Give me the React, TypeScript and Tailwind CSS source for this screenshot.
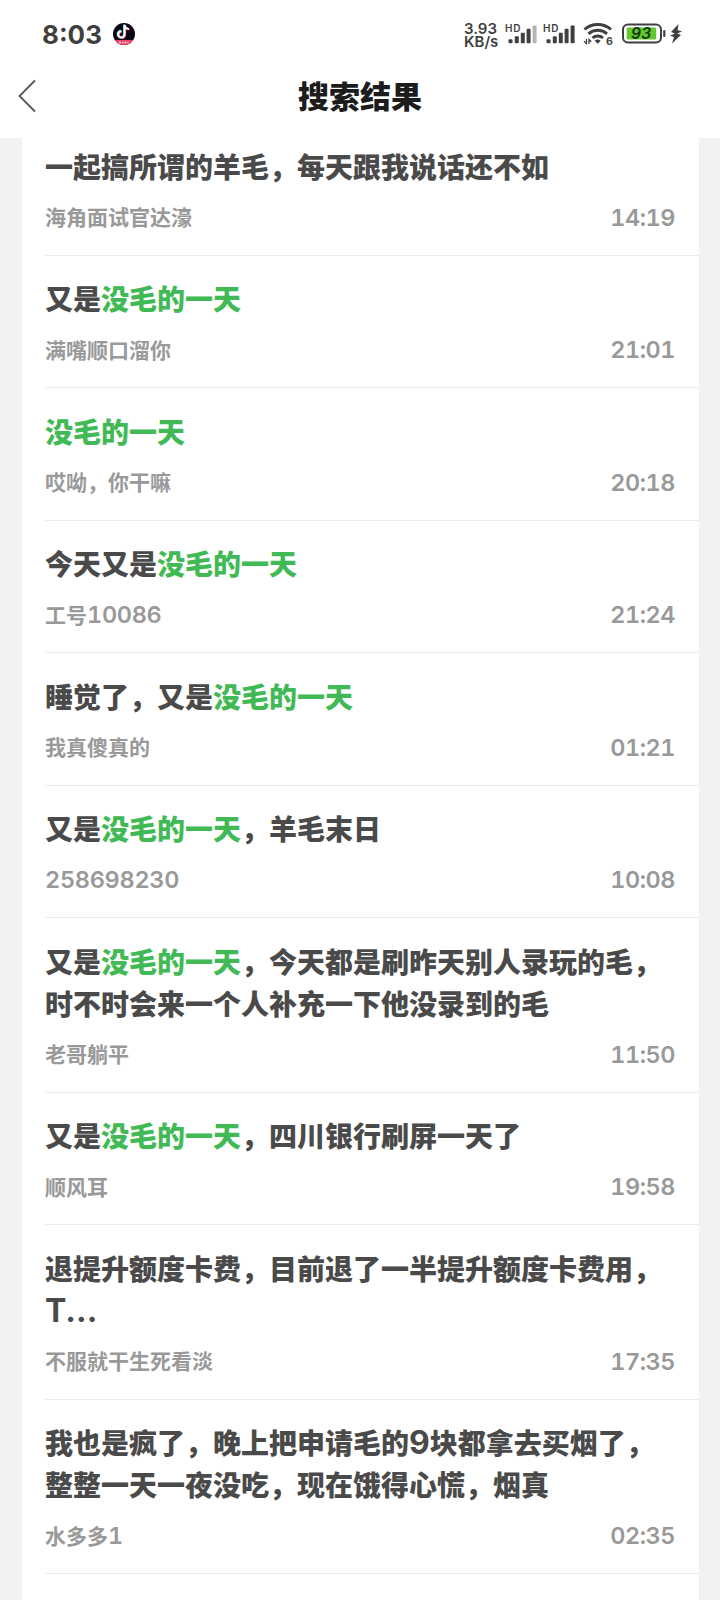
import React from 'react';

interface Result {
  id: number;
  lines: string[];
  author: string;
  time: string;
}

const KEYWORD = '没毛的一天';

const results: Result[] = [
  { id: 1, lines: ['一起搞所谓的羊毛，每天跟我说话还不如'], author: '海角面试官达濠', time: '14:19' },
  { id: 2, lines: ['又是没毛的一天'], author: '满嘴顺口溜你', time: '21:01' },
  { id: 3, lines: ['没毛的一天'], author: '哎呦，你干嘛', time: '20:18' },
  { id: 4, lines: ['今天又是没毛的一天'], author: '工号10086', time: '21:24' },
  { id: 5, lines: ['睡觉了，又是没毛的一天'], author: '我真傻真的', time: '01:21' },
  { id: 6, lines: ['又是没毛的一天，羊毛末日'], author: '258698230', time: '10:08' },
  { id: 7, lines: ['又是没毛的一天，今天都是刷昨天别人录玩的毛，', '时不时会来一个人补充一下他没录到的毛'], author: '老哥躺平', time: '11:50' },
  { id: 8, lines: ['又是没毛的一天，四川银行刷屏一天了'], author: '顺风耳', time: '19:58' },
  { id: 9, lines: ['退提升额度卡费，目前退了一半提升额度卡费用，', 'T...'], author: '不服就干生死看淡', time: '17:35' },
  { id: 10, lines: ['我也是疯了，晚上把申请毛的9块都拿去买烟了，', '整整一天一夜没吃，现在饿得心慌，烟真'], author: '水多多1', time: '02:35' },
];

// Latin letters and digits are set a little larger than the Chinese text around them
const MixedText: React.FC<{ text: string; latin: string }> = ({ text, latin }) => (
  <>
    {text.split(/([A-Za-z0-9.]+)/).map((part, i) =>
      i % 2 === 1 ? <span key={i} className={latin}>{part}</span> : part
    )}
  </>
);

const TitleLine: React.FC<{ text: string }> = ({ text }) => (
  <span className="block h-[42px] whitespace-nowrap">
    {text.split(new RegExp(`(${KEYWORD})`)).map((part, i) =>
      part === KEYWORD ? (
        <span key={i} className="text-[#41ba55]">{part}</span>
      ) : (
        <MixedText key={i} text={part} latin="font-[Inter] text-[32px] leading-none font-bold" />
      )
    )}
  </span>
);

const Signal: React.FC<{ weak?: boolean }> = ({ weak }) => (
  <svg width="34" height="24" viewBox="0 0 34 24" fill="#3f3f3f">
    <text x="0" y="9.5" fontFamily="Inter" fontSize="10" fontWeight="600" textLength="15.5">HD</text>
    <rect x="3.5" y="17.3" width="4" height="4" rx="1" />
    <rect x="9.8" y="14.2" width="4" height="7.1" rx="1" />
    <rect x="15.8" y="10.8" width="4" height="10.5" rx="1" />
    <rect x="21.6" y="6.8" width="4" height="14.5" rx="1" />
    <rect x="27.6" y="3.6" width="4" height="17.7" rx="1" fill={weak ? '#b5b5b5' : '#3f3f3f'} />
  </svg>
);

const Wifi = () => (
  <svg width="32" height="26" viewBox="0 0 32 26" fill="none" stroke="#3f3f3f">
    <path d="M1.5 8.5C9 1.8 20.5 1.8 28 8.5" strokeWidth="3" />
    <path d="M5.5 12.8c5.3-4.7 13.2-4.7 18.5 0" strokeWidth="3" />
    <path d="M9.5 17c3-2.7 7.5-2.7 10.5 0" strokeWidth="3" />
    <path d="M14.7 22.7l-3-3c1.8-1.6 4.2-1.6 6 0z" fill="#3f3f3f" stroke="none" />
    <path d="M3.5 18v4.5l-2.5-2.3M6 23v-4.5l2.3 2.3" strokeWidth="1.3" />
    <text x="23" y="24" fontFamily="Inter" fontSize="10.5" fontWeight="700" fill="#3f3f3f" stroke="none">6</text>
  </svg>
);

const Battery = () => (
  <svg width="44" height="22" viewBox="0 0 44 22">
    <rect x="1" y="1.5" width="38" height="18" rx="5" fill="#fff" stroke="#3f3f3f" strokeWidth="2" />
    <rect x="4.7" y="4.5" width="29.5" height="12" rx="1.5" fill="#62c92b" />
    <path d="M42.3 8v5" stroke="#3f3f3f" strokeWidth="2.2" strokeLinecap="round" />
    <text x="9" y="16.2" fontFamily="Inter" fontSize="15.5" fontWeight="600" fontStyle="italic" fill="#16380a" textLength="20">93</text>
  </svg>
);

const Bolt = () => (
  <svg width="12" height="20" viewBox="0 0 12 20" fill="#3f3f3f">
    <path d="M8.5 0L1 8l3.8 1.5L0 11.8l4 1.2-2 6.500 9-8.500-3.800-1.500L12 7.500 7.500 6z" />
  </svg>
);

const TikTok = () => (
  <svg width="22" height="22" viewBox="0 0 22 22">
    <defs>
      <clipPath id="disc"><circle cx="11" cy="11" r="11" /></clipPath>
    </defs>
    <g clipPath="url(#disc)">
      <rect width="22" height="22" fill="#0d0714" />
      <rect y="17" width="22" height="5" fill="#f0436a" />
      <path d="M6 19.5h2m1 0h1.5m1 0h2m1 0h1" stroke="#fbd3dc" strokeWidth="1.5" />
      <g fill="none" strokeWidth="2">
        <path d="M11 1.5V11a3.200 3.200 0 1 1-3.200-3.200M11 1.500c.3 2.500 1.800 4 4.300 4.200" stroke="#29e5e0" />
        <path d="M12.200 2.300v9.500a3.200 3.200 0 1 1-3.200-3.200M12.200 2.300c.3 2.500 1.800 4 4.300 4.200" stroke="#f5315c" />
        <path d="M11.600 1.900v9.500a3.200 3.200 0 1 1-3.200-3.200M11.600 1.900c.3 2.500 1.800 4 4.300 4.200" stroke="#fff" />
      </g>
    </g>
  </svg>
);

const StatusBar = () => (
  <div className="flex h-[68px] items-center pr-[38px] pl-[42px] text-[#3f3f3f]">
    <span className="w-[71px] pt-px font-[Inter] text-[26px] leading-none font-bold">8:03</span>
    <TikTok />
    <div className="ml-auto flex items-center">
      <div className="mr-1 flex w-[37px] flex-col pt-px font-[Inter] text-[15px] leading-[13px] font-semibold">
        <span>3.93</span>
        <span>KB/s</span>
      </div>
      <Signal weak />
      <div className="ml-1"><Signal /></div>
      <div className="ml-[6px]"><Wifi /></div>
      <div className="ml-[7px]"><Battery /></div>
      <div className="ml-1"><Bolt /></div>
    </div>
  </div>
);

const Header = () => (
  <header className="grid h-[70px] grid-cols-[1fr_auto_1fr] items-center px-[18px]">
    <button aria-label="返回" className="-mt-[15px] w-[18px]">
      <svg width="18" height="34" viewBox="0 0 18 34" fill="none" stroke="#555" strokeWidth="1.8">
        <path d="M17 1.5L1.5 17 17 32.5" />
      </svg>
    </button>
    <h1 className="-mt-[17px] text-[31px] leading-none font-black text-[#1c1c1c]">搜索结果</h1>
  </header>
);

const ResultRow: React.FC<{ item: Result }> = ({ item }) => (
  <li className="border-b border-[#ececec] pt-[21.5px] pr-6 pb-[23.56px] first:pt-[6.5px]">
    <h2 className="text-[28px] leading-[42px] font-black text-[#4a4a4a]">
      {item.lines.map(line => (
        <TitleLine key={line} text={line} />
      ))}
    </h2>
    <div className="mt-[14.5px] flex h-[30px] items-center justify-between text-[21px] leading-[30px] font-bold text-[#999]">
      <span>
        <MixedText text={item.author} latin="font-[Inter] text-[23.5px] leading-none font-semibold tracking-[-0.3px] tabular-nums" />
      </span>
      <span className="pt-[3px] font-[Inter] text-[23.5px] font-semibold tracking-[-0.5px] tabular-nums">{item.time}</span>
    </div>
  </li>
);

const App: React.FC = () => {
  return (
    <div lang="zh-CN" className="flex h-[1600px] w-[720px] flex-col overflow-hidden bg-white font-['Noto_Sans_CJK_SC',sans-serif]">
      <StatusBar />
      <Header />
      <main className="flex-1 overflow-hidden bg-[#f2f2f2] pr-[21px] pl-[22px]">
        <ul className="h-full bg-white pl-[23px]">
          {results.map(item => (
            <ResultRow key={item.id} item={item} />
          ))}
        </ul>
      </main>
    </div>
  );
};

export default App;
